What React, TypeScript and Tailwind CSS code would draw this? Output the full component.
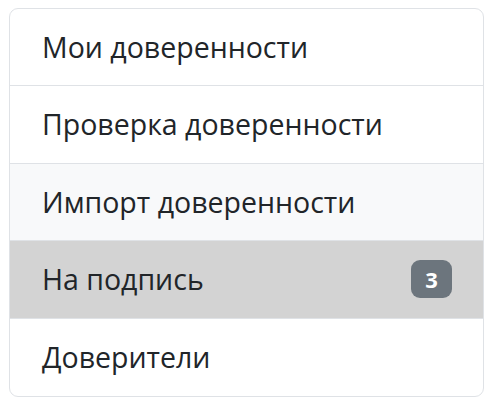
const items = [
  { label: 'Мои доверенности' },
  { label: 'Проверка доверенности' },
  { label: 'Импорт доверенности', tone: 'hover' },
  { label: 'На подпись', tone: 'active', badge: 3 },
  { label: 'Доверители' },
];

export default function App() {
  return (
    <div className="min-h-[405px] w-[494px] bg-white pl-[9px] pt-[8px] font-['Open_Sans',sans-serif]">
      <ul className="flex w-[475px] flex-col overflow-hidden rounded-[9px] border border-[#dfe2e6]">
        {items.map((item, i) => (
          <li
            key={item.label}
            className={[
              'flex h-[77.4px] items-center justify-between pl-[32px] pr-[31px] text-[28.5px] text-[#212529]',
              i < items.length - 1 ? 'border-b border-[#dfe2e6]' : '',
              item.tone === 'hover' ? 'bg-[#f8f9fa]' : '',
              item.tone === 'active' ? 'bg-[#d3d3d3]' : '',
            ].join(' ')}
          >
            <span>{item.label}</span>
            {item.badge ? (
              <span className="flex h-[38px] w-[41px] items-center justify-center rounded-[9px] bg-[#6c757d] text-[22px] font-bold text-white">
                {item.badge}
              </span>
            ) : null}
          </li>
        ))}
      </ul>
    </div>
  );
}
